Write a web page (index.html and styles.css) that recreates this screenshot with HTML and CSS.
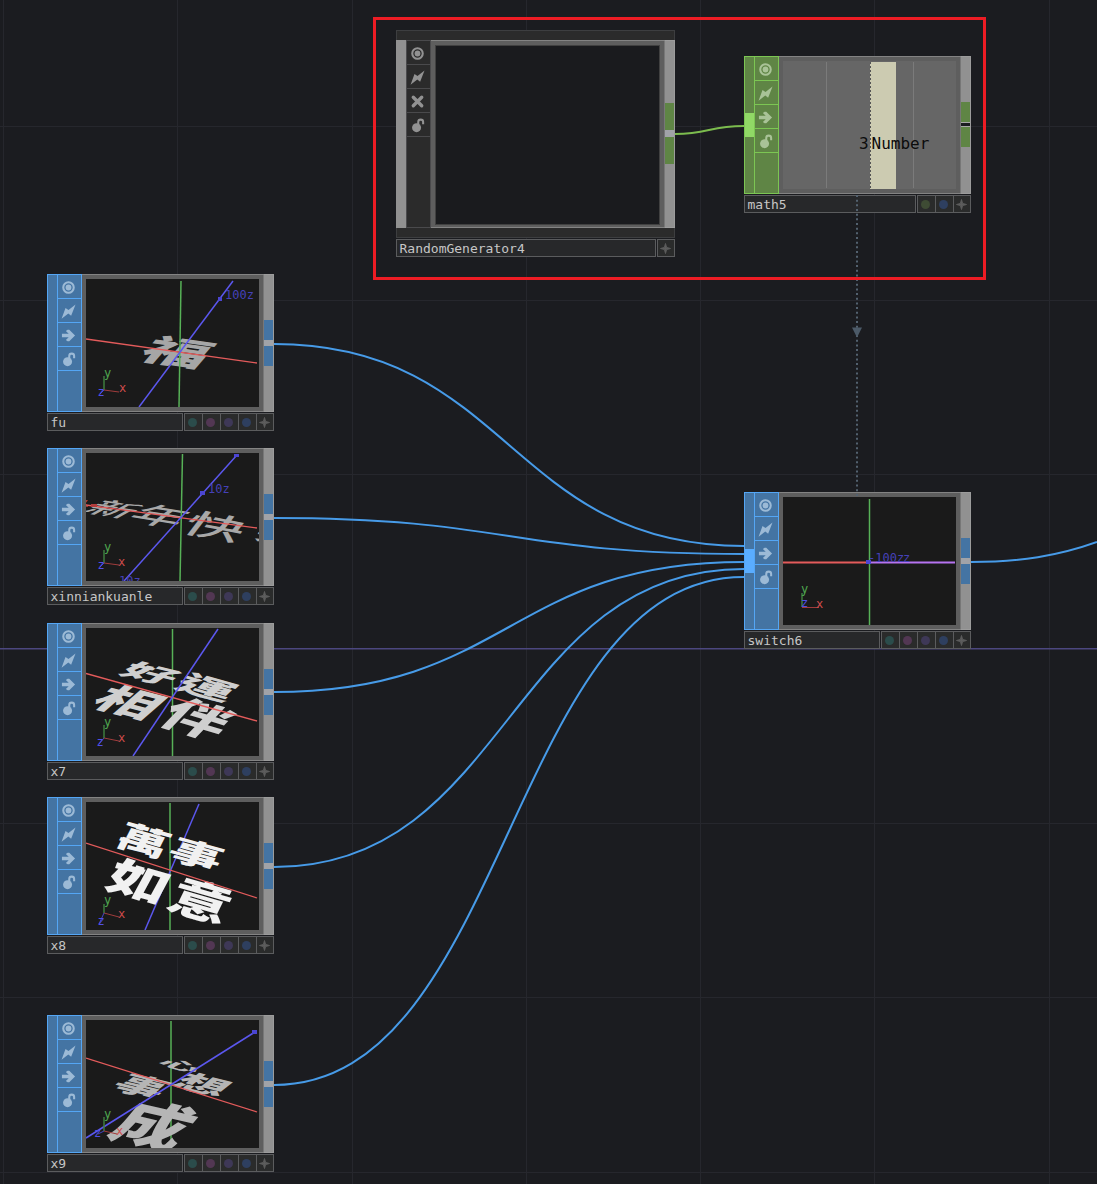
FILE: index.html
```html
<!DOCTYPE html>
<html lang="zh-Hant">
<head>
<meta charset="utf-8">
<title>Network editor</title>
<link rel="stylesheet" href="styles.css">
</head>
<body>
<svg class="defs" width="0" height="0">
  <symbol id="eye" viewBox="0 0 16 16"><circle cx="8" cy="8" r="5.6" fill="none" stroke="currentColor" stroke-width="2.2"/><circle cx="8" cy="8" r="3.1" fill="currentColor"/></symbol>
  <symbol id="bolt" viewBox="0 0 16 16"><path d="M.6 15.6 4.8 4.2 8 6.3 15.5 .6 10.8 12.4 7.8 10.2Z" fill="currentColor"/></symbol>
  <symbol id="arrow" viewBox="0 0 16 16"><path d="M1 6.1H8.2L5.2 3.2 7 1.8H8.8L15 8 8.8 14.2H7L5.2 12.8 8.200 9.9H1Z" fill="currentColor"/></symbol>
  <symbol id="cross" viewBox="0 0 16 16"><path d="M3.5 3.5 12.5 12.5M12.5 3.5 3.5 12.5" stroke="currentColor" stroke-width="3.6" stroke-linecap="round"/></symbol>
  <symbol id="lock" viewBox="0 0 16 16"><circle cx="7" cy="10.3" r="4.8" fill="currentColor"/><path d="M8.800 7.2V4.3A2.6 2.6 0 0 1 14 4.300V6.700" fill="none" stroke="currentColor" stroke-width="2.2"/></symbol>
  <symbol id="plus" viewBox="0 0 12 12"><path d="M6 .5 7.2 4.8 11.5 6 7.2 7.2 6 11.5 4.8 7.2 .5 6 4.8 4.8Z" fill="currentColor" stroke="currentColor"/></symbol>
</svg>
<main class="canvas">
  <svg class="grid" width="1097" height="1184">
    <path d="M3.5 0V1184M177.5 0V1184M352.5 0V1184M526.5 0V1184M700.5 0V1184M874.5 0V1184M1049.5 0V1184M0 126.5H1097M0 300.5H1097M0 474.5H1097M0 823.5H1097M0 997.5H1097M0 1172.5H1097"/>
    <path class="origin" d="M0 648.800H1097"/>
  </svg>

  <section class="node gray tall n-random">
    <div class="cap"></div>
    <div class="body">
      <div class="input"></div>
      <div class="tools"><i><svg><use href="#eye"/></svg></i><i><svg><use href="#bolt"/></svg></i><i><svg><use href="#cross"/></svg></i><i><svg><use href="#lock"/></svg></i></div>
      <div class="frame"></div>
      <div class="output"><b></b><u></u><b></b></div>
    </div>
    <div class="cap foot"></div>
    <div class="label"><span class="name">RandomGenerator4</span><span class="flags"><i><svg><use href="#plus"/></svg></i></span></div>
  </section>

  <section class="node green n-math">
    <div class="body">
      <div class="input"><b></b></div>
      <div class="tools"><i><svg><use href="#eye"/></svg></i><i><svg><use href="#bolt"/></svg></i><i><svg><use href="#arrow"/></svg></i><i><svg><use href="#lock"/></svg></i></div>
      <div class="frame"><svg class="screen" viewBox="0 0 173 128">
        <path d="M43.5 1V127M130.5 1V127" stroke="#7b7b7b"/>
        <rect x="87" y="1" width="26" height="127" fill="#cccbb1"/>
        <path d="M87.5 1V128" stroke="#555" stroke-dasharray="2 2"/>
        <text class="value" x="76" y="88">3</text><text class="value" x="88.500" y="88">Number</text>
      </svg></div>
      <div class="output split"><b></b><u></u><b></b></div>
    </div>
    <div class="label"><span class="name">math5</span><span class="flags"><i class="dot olive"></i><i class="dot blue"></i><i><svg><use href="#plus"/></svg></i></span></div>
  </section>

  <section class="node n-fu">
    <div class="body">
      <div class="input"></div>
      <div class="tools"><i><svg><use href="#eye"/></svg></i><i><svg><use href="#bolt"/></svg></i><i><svg><use href="#arrow"/></svg></i><i><svg><use href="#lock"/></svg></i></div>
      <div class="frame"><svg class="screen" viewBox="0 0 173 128">
        <text class="glyph" fill="#a6a6a6" transform="matrix(.64 .09 -.25 .29 72 54)" y="88">福</text>
        <path class="ay" d="M95 2 93 128"/><path class="ax" d="M0 60 171 84"/><path class="az" d="M147 2 53 128"/>
        <rect class="mark" x="132" y="18" width="4" height="4"/><text class="tick" x="139" y="20">100z</text>
        <path class="gy" d="M18 97V111"/><path class="gx" d="M18 111 33 113"/><path class="gz" d="M18 111 14 115"/>
        <text class="ty" x="18" y="98">y</text><text class="tx" x="33" y="113">x</text><text class="tz" x="11.500" y="117">z</text>
      </svg></div>
      <div class="output"><b></b><u></u><b></b></div>
    </div>
    <div class="label"><span class="name">fu</span><span class="flags"><i class="dot teal"></i><i class="dot plum"></i><i class="dot violet"></i><i class="dot blue"></i><i><svg><use href="#plus"/></svg></i></span></div>
  </section>

  <section class="node n-xin">
    <div class="body">
      <div class="input"></div>
      <div class="tools"><i><svg><use href="#eye"/></svg></i><i><svg><use href="#bolt"/></svg></i><i><svg><use href="#arrow"/></svg></i><i><svg><use href="#lock"/></svg></i></div>
      <div class="frame"><svg class="screen" viewBox="0 0 173 128">
        <g class="glyph thin" fill="#a8a8a8">
          <text transform="matrix(.43 .07 -.27 .15 20 45)" y="88">新</text>
          <text transform="matrix(.5 .08 -.27 .2 63 49)" y="88">年</text>
          <text transform="matrix(.57 .11 -.2 .26 111 55)" y="88">快</text>
          <text transform="matrix(.5 .09 -.1 .26 176 63)" y="88">樂</text>
        </g>
        <path class="ay" d="M96.500 1 94 128"/><path class="ax" d="M0 52 171 75"/><path class="az" d="M151 2 38 128"/>
        <rect x="5" y="51" width="6" height="3" fill="#b23c3c"/><text class="tx" x="-5" y="54">x</text>
        <rect class="mark" x="114" y="38" width="5" height="4"/><rect class="mark" x="148" y="1" width="5" height="3"/>
        <text class="tick" x="122" y="40">10z</text><text class="tick" x="33" y="132">10z</text>
        <path class="gy" d="M18 97V110"/><path class="gx" d="M18 110 33 112"/><path class="gz" d="M18 110 14 114"/>
        <text class="ty" x="18" y="98">y</text><text class="tx" x="32" y="113">x</text><text class="tz" x="11.500" y="116">z</text>
      </svg></div>
      <div class="output"><b></b><u></u><b></b></div>
    </div>
    <div class="label"><span class="name">xinniankuanle</span><span class="flags"><i class="dot teal"></i><i class="dot plum"></i><i class="dot violet"></i><i class="dot blue"></i><i><svg><use href="#plus"/></svg></i></span></div>
  </section>

  <section class="node n-x7">
    <div class="body">
      <div class="input"></div>
      <div class="tools"><i><svg><use href="#eye"/></svg></i><i><svg><use href="#bolt"/></svg></i><i><svg><use href="#arrow"/></svg></i><i><svg><use href="#lock"/></svg></i></div>
      <div class="frame"><svg class="screen" viewBox="0 0 173 128">
        <path class="ay" d="M86.500 1V128"/>
        <g class="glyph" fill="#cfcfcf">
          <text transform="matrix(.5 .12 -.23 .16 51 31.500)" y="88">好</text>
          <text transform="matrix(.54 .15 -.21 .2 104.500 42)" y="88">運</text>
          <text transform="matrix(.58 .15 -.31 .27 30 53)" y="88">相</text>
          <text transform="matrix(.6 .18 -.32 .33 97 65)" y="88">伴</text>
        </g>
        <path class="ax" d="M0 45.500 171 93"/><path class="az" d="M132 1 47 128"/>
        <path class="gy" d="M18 97V110"/><path class="gx" d="M18 110 33 113"/><path class="gz" d="M18 110 13 116"/>
        <text class="ty" x="18" y="98">y</text><text class="tx" x="32" y="114">x</text><text class="tz" x="10.500" y="118">z</text>
      </svg></div>
      <div class="output"><b></b><u></u><b></b></div>
    </div>
    <div class="label"><span class="name">x7</span><span class="flags"><i class="dot teal"></i><i class="dot plum"></i><i class="dot violet"></i><i class="dot blue"></i><i><svg><use href="#plus"/></svg></i></span></div>
  </section>

  <section class="node n-x8">
    <div class="body">
      <div class="input"></div>
      <div class="tools"><i><svg><use href="#eye"/></svg></i><i><svg><use href="#bolt"/></svg></i><i><svg><use href="#arrow"/></svg></i><i><svg><use href="#lock"/></svg></i></div>
      <div class="frame"><svg class="screen" viewBox="0 0 173 128">
        <path class="ay" d="M84 1V128"/><path class="az" d="M113 2 59 128"/>
        <g class="glyph" fill="#f1f1f1">
          <text transform="matrix(.49 .14 -.15 .29 41 17)" y="88">萬</text>
          <text transform="matrix(.51 .14 -.14 .26 92 32)" y="88">事</text>
          <text transform="matrix(.58 .17 -.2 .37 34 52.500)" y="88">如</text>
          <text transform="matrix(.59 .17 -.19 .39 95 71)" y="88">意</text>
        </g>
        <path class="ax" d="M0 41 171 96"/>
        <path class="gy" d="M18 102V111"/><path class="gx" d="M18 111 33 115"/><path class="gz" d="M18 111 13 122"/>
        <text class="ty" x="18" y="102">y</text><text class="tx" x="32" y="116">x</text><text class="tz" x="11.500" y="123">z</text>
      </svg></div>
      <div class="output"><b></b><u></u><b></b></div>
    </div>
    <div class="label"><span class="name">x8</span><span class="flags"><i class="dot teal"></i><i class="dot plum"></i><i class="dot violet"></i><i class="dot blue"></i><i><svg><use href="#plus"/></svg></i></span></div>
  </section>

  <section class="node n-x9">
    <div class="body">
      <div class="input"></div>
      <div class="tools"><i><svg><use href="#eye"/></svg></i><i><svg><use href="#bolt"/></svg></i><i><svg><use href="#arrow"/></svg></i><i><svg><use href="#lock"/></svg></i></div>
      <div class="frame"><svg class="screen" viewBox="0 0 173 128">
        <path class="ay" d="M85 1V125"/>
        <g class="glyph" fill="#b5b5b5">
          <text transform="matrix(.37 .1 -.16 .08 84 36.500)" y="88">心</text>
          <text transform="matrix(.48 .12 -.22 .17 104 50)" y="88">想</text>
          <text transform="matrix(.46 .11 -.25 .19 45.500 51)" y="88">事</text>
          <text transform="matrix(.68 .16 -.38 .46 53 74)" y="88">成</text>
        </g>
        <path class="ax" d="M0 38 171 92"/><path class="az" d="M169 12 0 118"/>
        <rect class="mark" x="166" y="10" width="5" height="4"/>
        <path class="gy" d="M18 97V111"/><path class="gx" d="M18 111 31 114"/><path class="gz" d="M18 111 12 114"/>
        <text class="ty" x="18" y="98">y</text><text class="tx" x="30" y="115">x</text><text class="tz" x="8" y="117">z</text>
      </svg></div>
      <div class="output"><b></b><u></u><b></b></div>
    </div>
    <div class="label"><span class="name">x9</span><span class="flags"><i class="dot teal"></i><i class="dot plum"></i><i class="dot violet"></i><i class="dot blue"></i><i><svg><use href="#plus"/></svg></i></span></div>
  </section>

  <section class="node n-switch">
    <div class="body">
      <div class="input"><b></b></div>
      <div class="tools"><i><svg><use href="#eye"/></svg></i><i><svg><use href="#bolt"/></svg></i><i><svg><use href="#arrow"/></svg></i><i><svg><use href="#lock"/></svg></i></div>
      <div class="frame"><svg class="screen" viewBox="0 0 173 128">
        <path d="M0 65.500H86" stroke="#e35b5b" stroke-width="1.800"/><path d="M86 65.500H172" stroke="#b673f0" stroke-width="1.800"/>
        <path class="ay" d="M86.500 2V128"/><rect class="mark" x="83" y="63" width="5" height="4"/>
        <text class="tick" x="85" y="65">-100z</text><text class="tick" x="120" y="65">z</text>
        <path class="gy" d="M19 96V110"/><path class="gx" d="M19 110.500H36"/>
        <text class="ty" x="18" y="96">y</text><text class="tx" x="33" y="111">x</text><text class="tz" x="18" y="110">z</text>
      </svg></div>
      <div class="output"><b></b><u></u><b></b></div>
    </div>
    <div class="label"><span class="name">switch6</span><span class="flags"><i class="dot teal"></i><i class="dot plum"></i><i class="dot violet"></i><i class="dot blue"></i><i><svg><use href="#plus"/></svg></i></span></div>
  </section>

  <svg class="wires" width="1097" height="1184">
    <path d="M274 344C509 344 509 546 744 546"/>
    <path d="M274 518C509 518 509 554 744 554"/>
    <path d="M274 692C509 692 509 562 744 562"/>
    <path d="M274 867C509 867 509 569 744 569"/>
    <path d="M274 1085C509 1085 509 577 744 577"/>
    <path d="M971 562C1020 562 1058 556 1097 542"/>
    <path class="chop" d="M675 134C709 134 709 126 744 126"/>
    <path class="export" d="M857 195V496"/>
    <path class="tip" d="M852 327.500H862L857 337.500Z"/>
  </svg>
  <div class="highlight"></div>
</main>
</body>
</html>
```
FILE: styles.css
```css
* { box-sizing: border-box; }
body { margin: 0; background: #1b1c20; }
.defs { position: absolute; }
.canvas {
  position: relative;
  width: 1097px;
  height: 1184px;
  overflow: hidden;
  font-family: "DejaVu Sans Mono", monospace;
  font-size: 13px;
}
.grid, .wires { position: absolute; left: 0; top: 0; fill: none; }
.grid path { stroke: #26272d; stroke-width: 1; }
.grid .origin { stroke: #4c477f; stroke-width: 1.4; }
.wires path { stroke: #479be8; stroke-width: 2; }
.wires .chop { stroke: #7cbc4e; }
.wires .export { stroke: #53616f; stroke-dasharray: 2 2.67; }
.wires .tip { fill: #4c5a68; stroke: none; }
.highlight {
  position: absolute;
  left: 373px;
  top: 17px;
  width: 613px;
  height: 263px;
  border: 3px solid #ed1c24;
}

/* nodes on the canvas */
.node {
  --fill: #4474a3;
  --line: #54a6f5;
  --icon: #9cbad6;
  --port: #4474a3;
  position: absolute;
  width: 227px;
}
.green { --fill: #5f8545; --line: #7cc653; --icon: #a9c397; --port: #5f8545; }
.gray { --fill: #2b2b2b; --line: #4a4a4c; --icon: #929292; --port: #5f8545; width: 279px; }
.n-random { left: 396px; top: 30px; }
.n-math { left: 744px; top: 56px; }
.n-fu { left: 47px; top: 274px; }
.n-xin { left: 47px; top: 448px; }
.n-x7 { left: 47px; top: 623px; }
.n-x8 { left: 47px; top: 797px; }
.n-x9 { left: 47px; top: 1015px; }
.n-switch { left: 744px; top: 492px; }

.body { display: flex; height: 138px; }
.tall .body { height: 188px; }
.cap { height: 10px; background: #2b2b2b; border: 1px solid #3d3e40; border-bottom: 0; }
.cap.foot { border: 1px solid #3d3e40; border-top: 0; }
.input {
  width: 10px;
  padding-top: 56px;
  background: var(--fill);
  border: 1px solid var(--line);
  border-right: 0;
}
.input b { display: block; height: 24px; width: 10px; background: #5aadff; }
.green .input b { background: #91d966; }
.gray .input { background: #919191; border-color: #919191; }
.tools {
  width: 25px;
  background: var(--fill);
  border: 1px solid var(--line);
  color: var(--icon);
}
.tools i {
  display: flex;
  height: 24px;
  padding-top: 2px;
  align-items: center;
  justify-content: center;
  border-bottom: 1px solid var(--line);
}
.tools svg { width: 15px; height: 15px; margin-right: 2px; }
.frame {
  flex: 1;
  padding: 4px;
  background: #5e5e5e;
  border-top: 1px solid #838383;
  border-bottom: 1px solid #838383;
}
.screen { display: block; width: 173px; height: 128px; background: #1a1a1a; }
.green .screen { background: #666; }
.gray .frame::before { content: ""; display: block; height: 100%; background: #1a1b1e; border: 1px solid #414141; }
.output {
  width: 11px;
  padding-top: 45px;
  background: #919191;
  border: 1px solid #9c9c9c;
  border-left-color: #777;
}
.output b { display: block; height: 20px; background: var(--port); }
.output u { display: block; height: 6px; background: #a1a3a8; }
.output.split u { height: 5px; background: #1b1c20; border: solid #a8a8a8; border-width: 1px 0; }
.gray .output { padding-top: 62px; }
.gray .output b { height: 27px; }
.gray .output u { height: 7px; }

.label { display: flex; gap: 1px; height: 18px; margin-top: 1px; }
.name {
  flex: 1;
  padding-left: 2.5px;
  line-height: 17px;
  color: #c6c6c6;
  background: #27282a;
  border: 1px solid #5b5c5e;
}
.flags { display: flex; border: 1px solid #5b5c5e; background: #2a2b2b; }
.flags i { display: flex; width: 18px; padding-right: 2px; align-items: center; justify-content: center; border-left: 1px solid #5b5c5e; }
.flags i:first-child { width: 17px; border-left: 0; }
.flags i:last-child { width: 17px; }
.gray .flags i:last-child { width: 16px; }
.flags svg { width: 11px; height: 11px; color: #5d5d5d; }
.dot::before { content: ""; width: 9px; height: 9px; border-radius: 50%; background: currentColor; }
.teal { color: #2b4c4b; }
.plum { color: #523753; }
.violet { color: #3e3857; }
.blue { color: #2e3f5f; }
.olive { color: #3e4b34; }
.flags .dot { border-left-color: #5b5c5e; }

/* viewer contents */
.screen path { fill: none; }
.glyph { font-family: "Noto Sans CJK TC", sans-serif; font-size: 100px; font-weight: 900; }
.glyph.thin { font-weight: 500; }
.ax { stroke: #e35b5b; stroke-width: 1.3; }
.ay { stroke: #57b157; stroke-width: 1.5; }
.az { stroke: #5b57ee; stroke-width: 1.5; }
.gx { stroke: #a03c3c; }
.gy { stroke: #3e7d3e; stroke-width: 1.5; }
.gz { stroke: #4444c4; }
.tx { fill: #d04c4c; font-size: 12px; }
.ty { fill: #4fa64f; font-size: 12px; }
.tz { fill: #5050e8; font-size: 12px; }
.tick { fill: #4541b8; font-size: 12px; }
.mark { fill: #4b45d2; }
.value { fill: #0c0c0c; font-size: 16px; }
```
